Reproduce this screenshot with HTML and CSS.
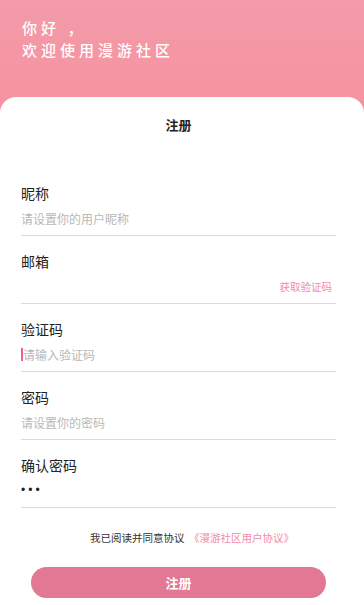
FILE: index.html
```html
<!DOCTYPE html>
<html lang="zh-CN">
<head>
  <meta charset="UTF-8">
  <meta name="viewport" content="width=device-width, initial-scale=1">
  <title>注册</title>
  <link rel="stylesheet" href="styles.css">
</head>
<body>
  <div class="page">
    <div class="hello">
      <p>你好 ，</p>
      <p>欢迎使用漫游社区</p>
    </div>

    <div class="card">
      <h1>注册</h1>

      <div class="field">
        <label>昵称</label>
        <div class="input"><span class="ph">请设置你的用户昵称</span></div>
      </div>

      <div class="field">
        <label>邮箱</label>
        <div class="input"><span></span><a class="code" href="#">获取验证码</a></div>
      </div>

      <div class="field">
        <label>验证码</label>
        <div class="input"><span class="caret"></span><span class="ph">请输入验证码</span></div>
      </div>

      <div class="field">
        <label>密码</label>
        <div class="input"><span class="ph">请设置你的密码</span></div>
      </div>

      <div class="field">
        <label>确认密码</label>
        <div class="input"><span class="dots">•••</span></div>
      </div>

      <p class="agree">我已阅读并同意协议 <a href="#">《漫游社区用户协议》</a></p>

      <button class="submit">注册</button>
    </div>
  </div>
</body>
</html>
```

FILE: styles.css
```css
body {
  margin: 0;
  font-family: "Noto Sans CJK SC", "Noto Sans", sans-serif;
  color: #222;
}

.page {
  min-height: 100vh;
  display: flex;
  flex-direction: column;
  background: linear-gradient(#f29ba9, #f7929f 110px, #f7929f);
}

.hello {
  padding: 17px 22px 36px;
  color: white;
  font-size: 15px;
  line-height: 22px;
  letter-spacing: 4px;
  font-weight: 500;
}

.hello p {
  margin: 0;
}

.card {
  flex: 1;
  background: white;
  border-radius: 16px 16px 0 0;
  padding: 18px 28px 0 21px;
}

.card h1 {
  margin: 0 0 48px;
  text-align: center;
  font-size: 13px;
  line-height: 20px;
  font-weight: bold;
}

.field {
  margin-bottom: 15px;
  border-bottom: 1px solid #dcdcdc;
  padding-bottom: 5px;
}

.field label {
  display: block;
  font-size: 14px;
  line-height: 20px;
}

.input {
  margin-top: 3px;
  height: 24px;
  display: flex;
  align-items: center;
  justify-content: space-between;
  font-size: 12px;
}

.ph {
  color: #b8b8b8;
  flex: 1;
}

.caret {
  width: 2px;
  height: 13px;
  background: #f0608c;
}

.code {
  color: #f28aa8;
  font-size: 10.5px;
  text-decoration: none;
  margin-right: 4px;
}

.dots {
  font-family: "Liberation Sans", sans-serif;
  font-size: 12px;
  letter-spacing: 3px;
  color: #222;
}

.agree {
  margin: 22px 0 0;
  text-align: center;
  font-size: 10.5px;
  line-height: 16px;
  color: #333;
  padding-left: 27px;
}

.agree a {
  color: #f28aa8;
  text-decoration: none;
  margin-left: 2px;
}

.submit {
  display: block;
  width: 295px;
  height: 31px;
  margin: 21px 0 0 10px;
  border: none;
  border-radius: 16px;
  background: #e37894;
  color: white;
  font-size: 13px;
  font-weight: bold;
  font-family: inherit;
}
```
